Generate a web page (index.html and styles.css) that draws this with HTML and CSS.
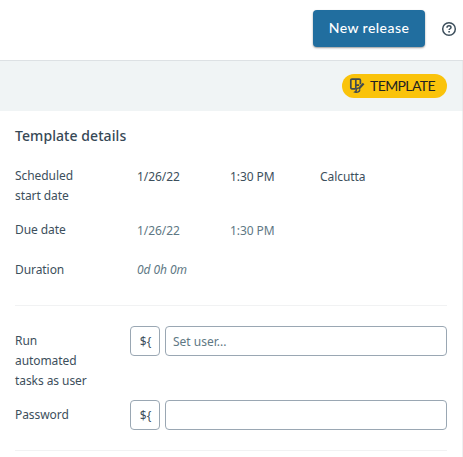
FILE: index.html
```
<!DOCTYPE html>
<html lang="en">
<head>
<meta charset="utf-8">
<title>Template details</title>
<link rel="stylesheet" href="styles.css">
</head>
<body>
<header class="header">
  <button class="primary">New release</button>
  <svg class="help" viewBox="0 0 16 16" width="16" height="16" fill="none" stroke="#3d4f5c">
    <circle cx="8" cy="8" r="6.3" stroke-width="1.5"/>
    <path d="M6 6.7C6 5.4 6.8 4.8 8 4.8s2 .7 2 1.7c0 1.2-1.9 1.3-1.9 2.6" stroke-width="1.5"/>
    <path d="M8.1 10v1.5" stroke-width="1.6"/>
  </svg>
</header>
<div class="toolbar">
  <div class="badge">
    <svg viewBox="0 0 16 16" width="16" height="16" fill="none" stroke="#414b50" stroke-width="1.7">
      <path d="M6.8 10.8H3Q1.8 10.8 1.8 9.6V2.3Q1.8 1.2 3 1.2h7.2q1.2 0 1.2 1.1v4M6.8 1.2v9.6M6.8 7.2h3.4"/>
      <path d="M14.6 5.4L9.8 10.8" stroke-width="2.2"/>
      <path d="M9.6 10.4c-1.7-.3-2.4.8-2.3 2-.1.8-.5 1.2-1.2 1.6 2.4.7 4.6-.1 4.7-2.6" stroke-width="1.5"/>
    </svg>
    <span>TEMPLATE</span>
  </div>
</div>
<main class="details">
  <h1>Template details</h1>
  <section class="dates">
    <div class="row start">
      <div class="label">Scheduled start date</div>
      <div class="date">1/26/22</div><div class="time">1:30 PM</div><div>Calcutta</div>
    </div>
    <div class="row due muted">
      <div class="label">Due date</div>
      <div class="date">1/26/22</div><div class="time">1:30 PM</div>
    </div>
    <div class="row duration muted">
      <div class="label">Duration</div>
      <div class="value">0d 0h 0m</div>
    </div>
  </section>
  <section class="account">
    <div class="field user">
      <label class="label" for="user">Run automated tasks as user</label>
      <button class="variable">${</button>
      <input id="user" placeholder="Set user...">
    </div>
    <div class="field">
      <label class="label" for="password">Password</label>
      <button class="variable">${</button>
      <input id="password" type="password">
    </div>
  </section>
</main>
</body>
</html>
```
FILE: styles.css
```
* { box-sizing: border-box; }
body {
  margin: 0;
  height: 457px;
  overflow: hidden;
  background: #fff;
  color: #3d4f5c;
  font: 12px/20px "Noto Sans", sans-serif;
  letter-spacing: -.07px;
}
.header {
  display: flex;
  justify-content: flex-end;
  align-items: flex-start;
  gap: 16px;
  height: 61px;
  padding: 10px 6px 0 0;
  border-bottom: 1px solid #dde1e4;
}
.primary {
  width: 112px;
  height: 37px;
  padding: 0 0 1px;
  border: 0;
  border-radius: 4px;
  background: #216e9f;
  box-shadow: 0 1px 2px rgba(0, 0, 0, .4);
  color: #fff;
  font: 500 14px/36px Lato, sans-serif;
  letter-spacing: .45px;
}
.help { margin-top: 11px; }
.toolbar {
  display: flex;
  justify-content: flex-end;
  height: 50px;
  padding: 13px 15px 0 0;
  border-right: 1px solid #e8eaec;
  background: #f0f4f5;
}
.badge {
  display: flex;
  align-items: center;
  width: 105px;
  height: 24px;
  padding-left: 7px;
  gap: 5px;
  border-radius: 12px;
  background: #fac30b;
  color: #222;
  font: 14px/24px Lato, sans-serif;
  letter-spacing: -.6px;
}
.details {
  height: 346px;
  padding: 15px 15px 0;
  border-right: 1px solid #eef0f1;
}
h1 {
  margin: 0;
  font-size: 14px;
  font-weight: 500;
  line-height: 20px;
  letter-spacing: .07px;
  color: #364856;
}
.dates {
  height: 160px;
  padding-top: 20px;
  border-bottom: 1px solid #f1f2f3;
}
.row { display: flex; align-items: flex-start; }
.row > :not(.label) { padding-top: 1px; }
.label { width: 78px; margin-right: 44px; color: #3d4f5c; }
.date { width: 93px; }
.time { width: 90px; }
.start { height: 54px; }
.due { height: 40px; }
.muted { color: #607884; }
.duration .value { padding-top: 0; font-style: italic; }
.account {
  height: 145px;
  padding-top: 20px;
  border-bottom: 1px solid #f1f2f3;
}
.field { display: flex; align-items: flex-start; height: 50px; }
.field.user { height: 74px; }
.field .label { width: 75px; margin: 5px 40px 0 0; }
.variable, input {
  height: 30px;
  border: 1px solid #9aa7b3;
  border-radius: 4px;
  background: #fff;
  color: #3d4f5c;
  font: 12px/20px "Noto Sans", sans-serif;
}
.variable { width: 30px; margin-right: 5px; padding: 2px 0 0 1px; }
input { flex: 1; min-width: 0; padding: 0 7px; }
input::placeholder { color: #607884; opacity: 1; }
```
